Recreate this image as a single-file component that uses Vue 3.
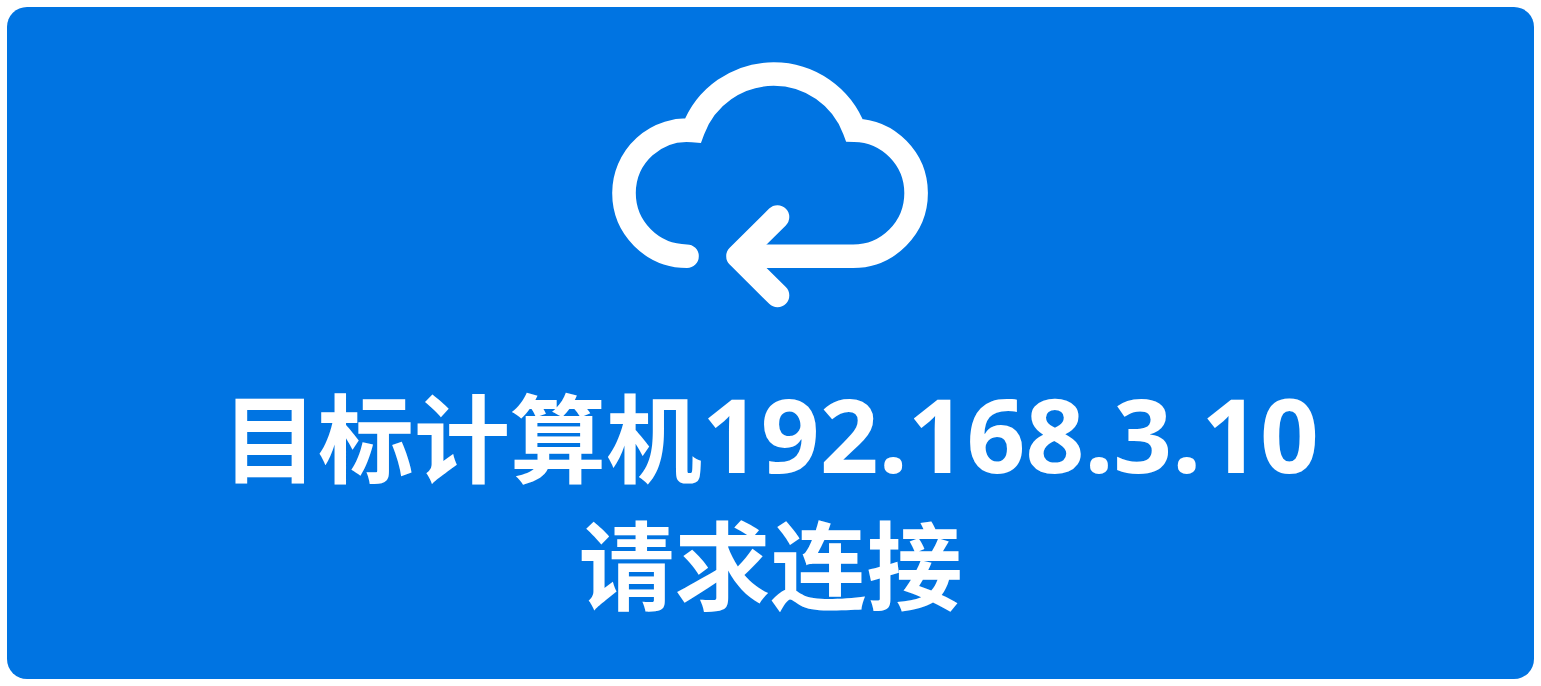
<script setup>
const target = '192.168.3.10'
</script>

<template>
  <main class="page">
    <section class="card">
      <svg class="cloud" viewBox="0 0 317 246" aria-hidden="true">
        <g fill="none" stroke="currentColor" stroke-width="23.6" stroke-linecap="round">
          <path d="M75 194.200A63 63.100 0 0 1 12 131A63 63 0 0 1 81 68.400A86 86 0 0 1 242.400 68.200A63 63 0 0 1 304.100 131A63 63.100 0 0 1 241 194.200H130" />
          <path d="M165.500 155L126 194.200L165.500 233.400" stroke-linejoin="round" />
        </g>
      </svg>
      <h1 class="message">
        <span class="line">目标计算机<span class="address">{{ target }}</span></span>
        <span class="line">请求连接</span>
      </h1>
    </section>
  </main>
</template>

<style>
body {
  margin: 0;
  background: #fff;
}
</style>

<style scoped>
.page {
  box-sizing: border-box;
  min-height: 100vh;
  padding: 7px;
  display: flex;
}

.card {
  flex: 1;
  display: flex;
  flex-direction: column;
  align-items: center;
  padding: 55px 24px 48px;
  border-radius: 20px;
  background: #0074e2;
  color: #fff;
}

.cloud {
  width: 317px;
  height: 246px;
  flex: none;
}

.message {
  margin: 62px 0 0;
  font-family: "Noto Sans CJK SC", sans-serif;
  font-size: 96px;
  line-height: 127px;
  font-weight: 700;
}

.line {
  display: flex;
  flex-wrap: wrap;
  align-items: center;
  justify-content: center;
}

.address {
  font-family: "Noto Sans", sans-serif;
  font-size: 103px;
}
</style>
